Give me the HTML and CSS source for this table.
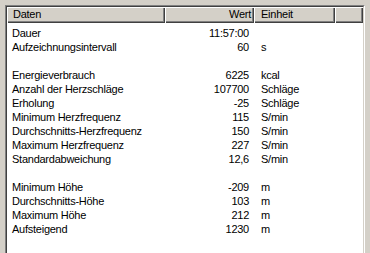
FILE: index.html
```html
<!DOCTYPE html>
<html>
<head>
<meta charset="utf-8">
<link rel="stylesheet" href="styles.css">
</head>
<body>
<div class="outer">
  <div class="inner">
    <div class="header">
      <div class="hcell c-name">Daten</div>
      <div class="hcell c-val">Wert</div>
      <div class="hcell c-unit">Einheit</div>
      <div class="hcell c-fill"></div>
    </div>
    <div class="rows">
      <div class="row"><span class="name">Dauer</span><span class="val">11:57:00</span><span class="unit"></span></div>
      <div class="row"><span class="name">Aufzeichnungsintervall</span><span class="val">60</span><span class="unit">s</span></div>
      <div class="row blank"></div>
      <div class="row"><span class="name">Energieverbrauch</span><span class="val">6225</span><span class="unit">kcal</span></div>
      <div class="row"><span class="name">Anzahl der Herzschläge</span><span class="val">107700</span><span class="unit">Schläge</span></div>
      <div class="row"><span class="name">Erholung</span><span class="val">-25</span><span class="unit">Schläge</span></div>
      <div class="row"><span class="name">Minimum Herzfrequenz</span><span class="val">115</span><span class="unit">S/min</span></div>
      <div class="row"><span class="name">Durchschnitts-Herzfrequenz</span><span class="val">150</span><span class="unit">S/min</span></div>
      <div class="row"><span class="name">Maximum Herzfrequenz</span><span class="val">227</span><span class="unit">S/min</span></div>
      <div class="row"><span class="name">Standardabweichung</span><span class="val">12,6</span><span class="unit">S/min</span></div>
      <div class="row blank"></div>
      <div class="row"><span class="name">Minimum Höhe</span><span class="val">-209</span><span class="unit">m</span></div>
      <div class="row"><span class="name">Durchschnitts-Höhe</span><span class="val">103</span><span class="unit">m</span></div>
      <div class="row"><span class="name">Maximum Höhe</span><span class="val">212</span><span class="unit">m</span></div>
      <div class="row"><span class="name">Aufsteigend</span><span class="val">1230</span><span class="unit">m</span></div>
    </div>
  </div>
</div>
</body>
</html>
```
FILE: styles.css
```css
html, body {
  margin: 0;
  padding: 0;
  background: #d4d0c8;
  overflow: hidden;
}
body {
  font-family: "Liberation Sans", Arial, sans-serif;
  font-size: 11px;
  letter-spacing: -0.25px;
  color: #000;
}
.outer {
  margin: 5px 0 0 5px;
  width: 358px;
  height: 260px;
  border: 1px solid;
  border-color: #808080 #ffffff #ffffff #808080;
}
.inner {
  height: 258px;
  border: 1px solid;
  border-color: #404040 #d4d0c8 #d4d0c8 #404040;
  background: #ffffff;
}
.header {
  display: flex;
  height: 16px;
  background: #d4d0c8;
}
.hcell {
  box-sizing: border-box;
  height: 16px;
  line-height: 15px;
  box-shadow: inset 1px 1px #ffffff, inset -1px -1px #404040, inset -2px -2px #808080;
  white-space: nowrap;
}
.c-name { width: 158px; padding-left: 6px; }
.c-val { width: 89px; text-align: right; padding-right: 3px; }
.c-unit { width: 81px; padding-left: 7px; }
.c-fill { flex: 1; }
.rows {
  padding-top: 3px;
}
.row {
  display: flex;
  height: 14px;
  line-height: 14px;
  white-space: nowrap;
}
.name { width: 158px; padding-left: 5px; box-sizing: border-box; }
.val { width: 89px; text-align: right; padding-right: 5px; box-sizing: border-box; }
.unit { padding-left: 7px; }
```
